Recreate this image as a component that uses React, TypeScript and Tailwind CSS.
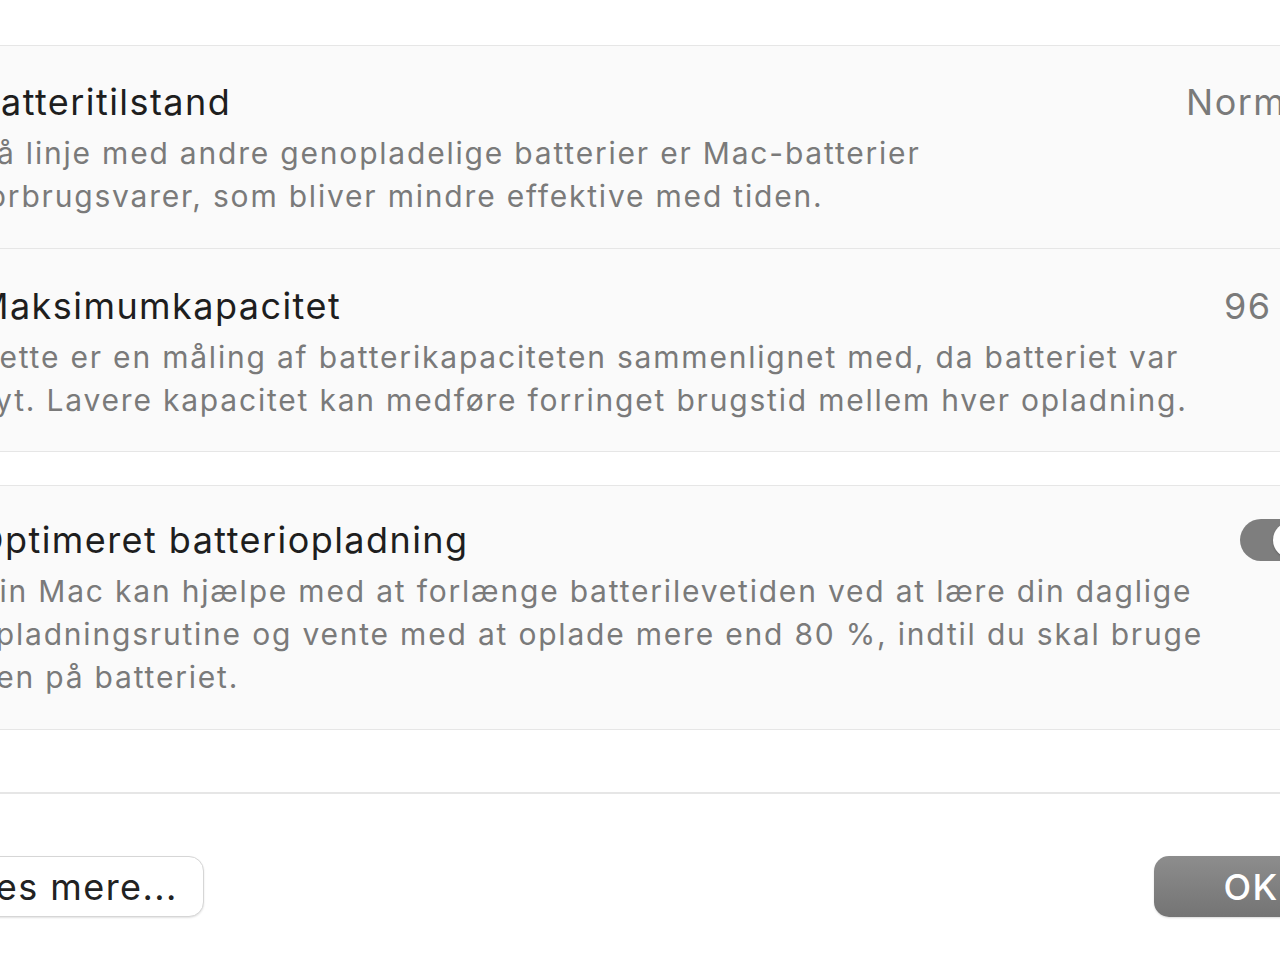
const font = { fontFamily: "Inter, 'Noto Sans', sans-serif" };

type RowProps = {
  title: string;
  lines: string[];
  right?: React.ReactNode;
  pt: string;
  pb: string;
};

function Row({ title, lines, right, pt, pb }: RowProps) {
  return (
    <div className={`flex items-start justify-between px-[40px] ${pt} ${pb}`}>
      <div>
        <p className="text-[36px] leading-[44px] tracking-[0.04em] text-[#1e1e1e] whitespace-nowrap">{title}</p>
        <p className="mt-[8px] text-[30px] leading-[43px] tracking-[0.06em] text-[#7a7a7a] whitespace-nowrap">
          {lines.map((l, i) => (
            <span key={i} className="block">
              {l}
            </span>
          ))}
        </p>
      </div>
      {right}
    </div>
  );
}

function Toggle() {
  return (
    <div className="-mr-[4px] mt-[1px] flex h-[42px] w-[72px] shrink-0 items-center justify-end rounded-full bg-[#7e7e7e] p-[3px]">
      <div className="h-[36px] w-[36px] rounded-full bg-white shadow-[0_1px_2px_rgba(0,0,0,0.25)]" />
    </div>
  );
}

export default function App() {
  return (
    <div className="h-[960px] w-[1280px] overflow-hidden bg-white" style={font}>
      <div className="-ml-[64px] w-[1412px] pt-[45px]">
        <div className="border-y border-[#e6e6e6] bg-[#fafafa]">
          <Row
            title="Batteritilstand"
            lines={[
              "På linje med andre genopladelige batterier er Mac-batterier",
              "forbrugsvarer, som bliver mindre effektive med tiden.",
            ]}
            right={
              <span className="-mr-[10px] text-[36px] leading-[44px] tracking-[0.04em] text-[#7a7a7a]">Normal</span>
            }
            pt="pt-[34px]"
            pb="pb-[30px]"
          />
          <div className="border-t border-[#e6e6e6]" />
          <Row
            title="Maksimumkapacitet"
            lines={[
              "Dette er en måling af batterikapaciteten sammenlignet med, da batteriet var",
              "nyt. Lavere kapacitet kan medføre forringet brugstid mellem hver opladning.",
            ]}
            right={
              <span className="-mr-[12px] text-[36px] leading-[44px] tracking-[0.04em] text-[#7a7a7a]">96 %</span>
            }
            pt="pt-[35px]"
            pb="pb-[29px]"
          />
        </div>

        <div className="mt-[33px] border-y border-[#e6e6e6] bg-[#fafafa]">
          <Row
            title="Optimeret batteriopladning"
            lines={[
              "Din Mac kan hjælpe med at forlænge batterilevetiden ved at lære din daglige",
              "opladningsrutine og vente med at oplade mere end 80 %, indtil du skal bruge",
              "den på batteriet.",
            ]}
            right={<Toggle />}
            pt="pt-[32px]"
            pb="pb-[30px]"
          />
        </div>

        <div className="mt-[62px] border-t-2 border-[#e6e6e6]" />

        <div className="flex items-center justify-between pt-[62px]">
          <button className="h-[61px] rounded-[15px] border border-[#d6d6d6] bg-white px-[25px] text-[36px] tracking-[0.04em] text-[#222] shadow-[0_1px_2px_rgba(0,0,0,0.12)]">
            Læs mere...
          </button>
          <button className="h-[61px] w-[194px] rounded-[15px] bg-gradient-to-b from-[#8d8d8d] to-[#747474] text-[36px] font-medium tracking-[0.04em] text-white shadow-[0_1px_2px_rgba(0,0,0,0.15)]">
            OK
          </button>
        </div>
      </div>
    </div>
  );
}
